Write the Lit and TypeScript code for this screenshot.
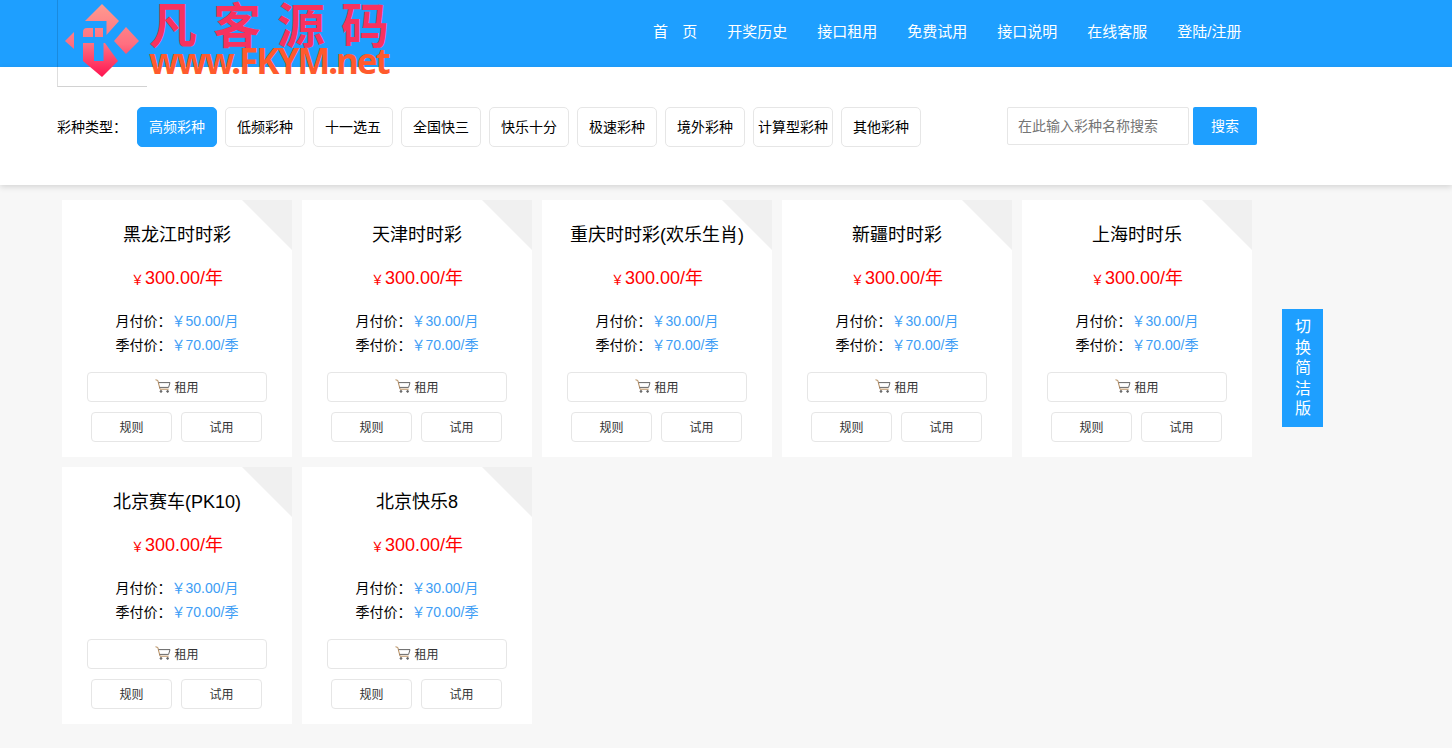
import { LitElement, html, css, svg } from "lit";
import { customElement, property } from "lit/decorators.js";

const NAV = ["开奖历史", "接口租用", "免费试用", "接口说明", "在线客服", "登陆/注册"];
const TYPES = ["高频彩种", "低频彩种", "十一选五", "全国快三", "快乐十分", "极速彩种", "境外彩种", "计算型彩种", "其他彩种"];
const GAMES = [
  { name: "黑龙江时时彩", month: "50.00" },
  { name: "天津时时彩", month: "30.00" },
  { name: "重庆时时彩(欢乐生肖)", month: "30.00" },
  { name: "新疆时时彩", month: "30.00" },
  { name: "上海时时乐", month: "30.00" },
  { name: "北京赛车(PK10)", month: "30.00" },
  { name: "北京快乐8", month: "30.00" },
];

const cartIcon = svg`<svg width="16" height="14" viewBox="0 0 16 14" fill="none" stroke="#666" stroke-width="1">
  <path d="M0.5 0.8 L2.8 1.4 L5 10.2 H13.6" stroke="#b58a5a"/>
  <path d="M3.6 3.6 H15 L13.6 8.4 H4.6"/>
  <circle cx="6" cy="12.4" r="0.9" fill="#666"/>
  <circle cx="12.6" cy="12.4" r="0.9" fill="#666"/>
</svg>`;

@customElement("game-card")
class GameCard extends LitElement {
  @property() name = "";
  @property() month = "";

  static styles = css`
    :host { display: block; }
    .card {
      position: relative;
      width: 230px;
      height: 257px;
      background: #fff;
      box-sizing: border-box;
      padding-top: 22px;
      text-align: center;
      color: #000;
    }
    .corner {
      position: absolute;
      top: 0;
      right: 0;
      width: 0;
      height: 0;
      border-style: solid;
      border-width: 0 50px 50px 0;
      border-color: transparent #f0f0f0 transparent transparent;
    }
    .name {
      position: relative;
      font-size: 18px;
      line-height: 26px;
      white-space: nowrap;
    }
    .price {
      margin-top: 17px;
      font-size: 18px;
      line-height: 26px;
      color: #f00;
    }
    .price small { font-size: 13px; margin-right: 1px; }
    .rows { margin-top: 16px; font-size: 14px; }
    .row { display: flex; justify-content: center; height: 24px; line-height: 24px; }
    .row .v { color: #3d9df5; }
    .rent {
      display: flex;
      align-items: center;
      justify-content: center;
      gap: 3px;
      box-sizing: border-box;
      width: 180px;
      height: 30px;
      margin: 15px auto 0;
      padding-bottom: 2px;
      border: 1px solid #e6e6e6;
      border-radius: 4px;
      font-size: 12px;
      color: #333;
    }
    .pair { display: flex; justify-content: center; gap: 9px; margin-top: 10px; padding-right: 1px; }
    .pair div {
      box-sizing: border-box;
      width: 81px;
      height: 30px;
      line-height: 30px;
      border: 1px solid #e6e6e6;
      border-radius: 4px;
      font-size: 12px;
      color: #333;
    }
  `;

  render() {
    return html`
      <div class="card">
        <div class="corner"></div>
        <div class="name">${this.name}</div>
        <div class="price"><small>￥</small>300.00/年</div>
        <div class="rows">
          <div class="row"><span>月付价：</span><span class="v">￥${this.month}/月</span></div>
          <div class="row"><span>季付价：</span><span class="v">￥70.00/季</span></div>
        </div>
        <div class="rent">${cartIcon}<span>租用</span></div>
        <div class="pair"><div>规则</div><div>试用</div></div>
      </div>
    `;
  }
}

@customElement("app-root")
class AppRoot extends LitElement {
  static styles = css`
    :host {
      display: block;
      position: relative;
      min-height: 748px;
      background: #f7f7f7;
      font-family: "Liberation Sans", "Noto Sans CJK SC", sans-serif;
      overflow: hidden;
    }
    .top { height: 67px; background: #1e9fff; }
    .nav {
      display: flex;
      gap: 30px;
      padding: 22px 0 0 653px;
      font-size: 15px;
      line-height: 20px;
      color: #fff;
    }
    .nav .home { word-spacing: 10px; }
    .logo { position: absolute; left: 57px; top: 0; width: 340px; height: 87px; }
    .logo .box {
      position: absolute;
      left: 0;
      top: 0;
      width: 90px;
      height: 87px;
      box-sizing: border-box;
      border-left: 1px solid rgba(0, 0, 0, 0.13);
      border-bottom: 1px solid #d2d2d2;
    }
    .logo svg { position: absolute; left: 0; top: 0; }
    .cn {
      position: absolute;
      left: 92px;
      top: 0;
      font-family: "Noto Sans CJK SC", sans-serif;
      font-weight: 700;
      font-size: 48px;
      line-height: 44px;
      letter-spacing: 16px;
      white-space: nowrap;
      color: #f7325f;
    }
    .en {
      position: absolute;
      left: 92px;
      top: 46px;
      font-family: "Noto Sans", sans-serif;
      font-weight: 700;
      font-size: 35px;
      line-height: 30px;
      letter-spacing: -2.05px;
      white-space: nowrap;
      color: #ff5a2d;
    }
    .panel {
      height: 118px;
      background: #fff;
      box-shadow: 0 2px 6px rgba(0, 0, 0, 0.14);
      padding: 40px 0 0 57px;
      box-sizing: border-box;
      display: flex;
      align-items: flex-start;
    }
    .label { width: 80px; font-size: 14px; line-height: 40px; color: #000; white-space: nowrap; }
    .types { display: flex; gap: 8px; }
    .types div {
      box-sizing: border-box;
      width: 80px;
      height: 40px;
      line-height: 38px;
      text-align: center;
      border: 1px solid #e6e6e6;
      border-radius: 5px;
      font-size: 14px;
      white-space: nowrap;
      color: #000;
    }
    .types div.on { background: #1e9fff; border-color: #1e9fff; color: #fff; }
    .search { display: flex; gap: 4px; margin-left: 86px; }
    .search .input {
      box-sizing: border-box;
      width: 182px;
      height: 38px;
      line-height: 36px;
      padding-left: 10px;
      border: 1px solid #e6e6e6;
      border-radius: 2px;
      font-size: 14px;
      color: #757575;
      white-space: nowrap;
    }
    .search .go {
      width: 64px;
      height: 38px;
      line-height: 38px;
      text-align: center;
      background: #1e9fff;
      border-radius: 2px;
      font-size: 14px;
      color: #fff;
    }
    .grid {
      display: grid;
      grid-template-columns: repeat(5, 230px);
      gap: 10px;
      padding: 15px 0 0 62px;
    }
    .switch {
      position: absolute;
      left: 1282px;
      top: 309px;
      width: 41px;
      height: 118px;
      box-sizing: border-box;
      padding: 8px 12px 0 13px;
      background: #1e9fff;
      color: #fff;
      font-size: 16px;
      line-height: 20.5px;
      text-align: center;
    }
  `;

  render() {
    return html`
      <div class="top">
        <div class="nav">
          <span class="home">首 页</span>
          ${NAV.map((n) => html`<span>${n}</span>`)}
        </div>
      </div>
      <div class="logo">
        <div class="box"></div>
        <svg width="90" height="87" viewBox="0 0 90 87">
          <defs>
            <linearGradient id="lg" gradientUnits="userSpaceOnUse" x1="0" y1="4" x2="0" y2="77">
              <stop offset="0" stop-color="#ff9a8f" />
              <stop offset="0.55" stop-color="#ff6f80" />
              <stop offset="1" stop-color="#ff1450" />
            </linearGradient>
          </defs>
          <g fill="url(#lg)">
            <path d="M45 4 L62 21 L49.5 35 V21 H28 Z" />
            <path d="M8 41 L17 32 V49 Z" />
            <path d="M57 41 L69 27 L82 41 L69 54 Z" />
            <path d="M26 37 V32 Q26 28 30 28 H36 V37 Z M38 28 H46 V37 H38 Z" />
            <path d="M26 43 H37 V61 H46.5 V43 H48 L61 61 L45 77 L26 61 Z" />
          </g>
        </svg>
        <div class="cn">凡客源码</div>
        <div class="en">www.FKYM.net</div>
      </div>
      <div class="panel">
        <div class="label">彩种类型：</div>
        <div class="types">
          ${TYPES.map((t, i) => html`<div class=${i === 0 ? "on" : ""}>${t}</div>`)}
        </div>
        <div class="search">
          <div class="input">在此输入彩种名称搜索</div>
          <div class="go">搜索</div>
        </div>
      </div>
      <div class="grid">
        ${GAMES.map((g) => html`<game-card .name=${g.name} .month=${g.month}></game-card>`)}
      </div>
      <div class="switch">切换简洁版</div>
    `;
  }
}
